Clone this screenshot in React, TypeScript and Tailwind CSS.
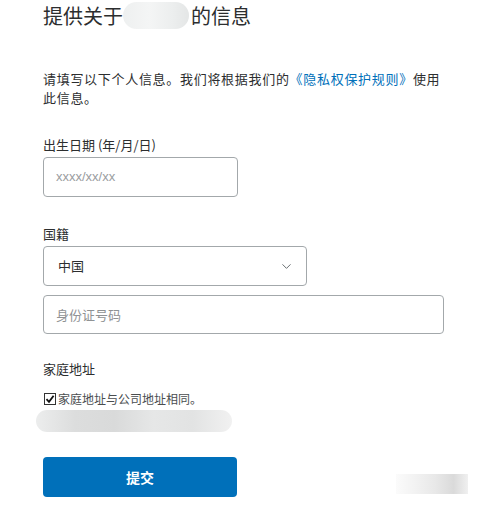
import React from 'react';
import { ChevronDown } from 'lucide-react';

const Blur: React.FC<{ className?: string }> = ({ className }) => (
  <span
    className={`block rounded-full bg-[linear-gradient(90deg,#eceded_0%,#dcdddd_20%,#d9dada_40%,#e6e7e7_60%,#e2e3e3_80%,#f1f1f1_100%)] ${className ?? ''}`}
  />
);

const App: React.FC = () => {
  return (
    <div className="w-[498px] h-[508px] bg-white pl-[43px] pt-[2px] font-['Noto_Sans_CJK_SC','Noto_Sans',sans-serif] text-[#2c2e2f]">
      <h1 className="flex items-center text-[20px] leading-[24px] font-normal">
        <span>提供关于</span>
        <span className="inline-block w-[66px] h-[27px] rounded-full bg-[linear-gradient(90deg,#eef0f0,#f4f5f5_40%,#eceeee_75%,#e4e6e6)]" />
        <span className="ml-[2px]">的信息</span>
      </h1>

      <p className="mt-[40px] w-[402px] text-[13px] leading-[19px] tracking-[0.7px]">
        请填写以下个人信息。我们将根据我们的<span className="text-[#0070ba]">《隐私权保护规则》</span>使用此信息。
      </p>

      <label className="block mt-[28px] text-[13px] leading-[19px]">出生日期 (年/月/日)</label>
      <div className="mt-[3px] w-[195px] h-[40px] border border-[#a3a8ab] rounded-[4px] flex items-center px-[12px] text-[13px] text-[#9a9d9f] font-['Liberation_Sans',sans-serif]">
        xxxx/xx/xx
      </div>

      <label className="block mt-[27px] text-[13px] leading-[19px]">国籍</label>
      <div className="mt-[3px] w-[264px] h-[40px] border border-[#a3a8ab] rounded-[4px] flex items-center justify-between pl-[14px] pr-[12px] text-[13px]">
        <span>中国</span>
        <ChevronDown className="w-[15px] h-[15px] text-[#5f6468]" strokeWidth={1.5} />
      </div>

      <div className="mt-[9px] w-[401px] h-[39px] border border-[#a3a8ab] rounded-[4px] flex items-center px-[12px] text-[13px] text-[#8f9294]">
        身份证号码
      </div>

      <div className="mt-[25px] text-[13px] leading-[19px]">家庭地址</div>

      <div className="mt-[13px] flex items-center text-[12px] leading-[16px] text-[#4a4d4f]">
        <span className="ml-[1px] w-[12px] h-[12px] border border-[#333] bg-white flex items-center justify-center">
          <svg viewBox="0 0 10 10" className="w-[10px] h-[10px]">
            <path d="M1.5 5.2 L4 7.8 L8.6 1.8" fill="none" stroke="#111" strokeWidth="1.8" />
          </svg>
        </span>
        <span className="ml-[2px]">家庭地址与公司地址相同。</span>
      </div>

      <Blur className="mt-[3px] -ml-[7px] w-[196px] h-[22px]" />

      <div className="mt-[25px] flex items-center">
        <button className="w-[194px] h-[40px] rounded-[4px] bg-[#0070ba] text-white text-[14px] font-bold">
          提交
        </button>
        <Blur className="ml-[159px] mt-[14px] w-[72px] h-[20px] rounded-none bg-[linear-gradient(90deg,#fbfbfb,#f1f1f1_30%,#e8e8e8_55%,#dadada_80%,#f0f0f0)]" />
      </div>
    </div>
  );
};

export default App;
